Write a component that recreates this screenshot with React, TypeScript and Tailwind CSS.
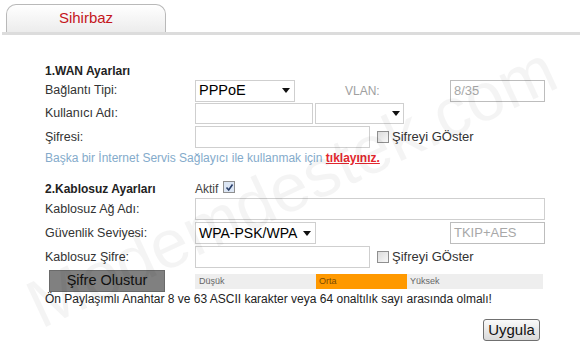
import React from "react";

const Arrow = () => (
  <svg width="8" height="5" viewBox="0 0 8 5" className="shrink-0">
    <path d="M0 0 H8 L4 5 Z" fill="#111" />
  </svg>
);

const Check = ({ checked }: { checked?: boolean }) => (
  <div
    className={
      "w-[12px] h-[12px] border border-[#8f8f8f] flex items-center justify-center " +
      (checked ? "bg-[#dce6f4]" : "bg-gradient-to-br from-[#dcdcdc] to-[#f8f8f8]")
    }
  >
    {checked && (
      <svg width="9" height="9" viewBox="0 0 9 9">
        <path d="M1.5 4.5 L3.7 7 L7.5 1.5" stroke="#2a3f6a" strokeWidth="1.6" fill="none" />
      </svg>
    )}
  </div>
);

const Label = ({ children }: { children: React.ReactNode }) => (
  <div className="w-[150px] shrink-0 text-[12.5px] text-[#333] whitespace-nowrap">{children}</div>
);

export default function App() {
  return (
    <div
      className="relative w-[582px] h-[351px] bg-white overflow-hidden"
      style={{ fontFamily: '"Liberation Sans", Arial, sans-serif' }}
    >
      {/* tab header */}
      <div className="pt-[4px] px-[4px] flex items-end border-b-[3px] border-[#dcdcdc] mx-[2px]">
        <div className="w-[160px] h-[28px] rounded-t-[10px] border border-b-0 border-[#b9b9b9] bg-gradient-to-b from-white to-[#ececec] flex items-center justify-center text-[15px] text-[#c4161c]">
          Sihirbaz
        </div>
      </div>

      <div className="flex flex-col pl-[45px] pt-[28px]">
        {/* WAN */}
        <div className="h-[16px] flex items-center text-[12px] font-bold text-[#222]">1.WAN Ayarları</div>
        <div className="h-[23px] flex items-center">
          <Label>Bağlantı Tipi:</Label>
          <div className="w-[100px] h-[22px] border border-[#cfcfcf] flex items-center justify-between pl-[3px] pr-[4px] text-[14.5px] text-black whitespace-nowrap">
            PPPoE <Arrow />
          </div>
          <div className="w-[155px] pl-[50px] text-[12px] text-[#a0a0a0]">VLAN:</div>
          <div className="w-[95px] h-[22px] border border-[#bdbdbd] flex items-center pl-[3px] text-[13px] text-[#a8a8a8]">
            8/35
          </div>
        </div>
        <div className="h-[23px] flex items-center">
          <Label>Kullanıcı Adı:</Label>
          <div className="w-[118px] h-[21px] border border-[#cfcfcf]" />
          <div className="ml-[2px] w-[89px] h-[21px] border border-[#cfcfcf] flex items-center justify-end pr-[3px]">
            <Arrow />
          </div>
        </div>
        <div className="h-[24px] flex items-center">
          <Label>Şifresi:</Label>
          <div className="w-[175px] h-[22px] border border-[#cfcfcf]" />
          <div className="ml-[7px]">
            <Check />
          </div>
          <div className="ml-[3px] text-[13px] text-[#333]">Şifreyi GÖster</div>
        </div>
        <div className="h-[18px] flex items-center text-[12px] text-[#84abcb] whitespace-nowrap">
          Başka bir İnternet Servis Sağlayıcı ile kullanmak için&nbsp;
          <span className="text-[#e3262d] font-bold underline">tıklayınız.</span>
        </div>

        {/* Wireless */}
        <div className="mt-[14px] h-[16px] flex items-center">
          <div className="w-[150px] text-[12px] font-bold text-[#222]">2.Kablosuz Ayarları</div>
          <div className="text-[12px] text-[#444]">Aktif</div>
          <div className="ml-[5px] -mt-[4px]">
            <Check checked />
          </div>
        </div>
        <div className="h-[24px] flex items-center">
          <Label>Kablosuz Ağ Adı:</Label>
          <div className="w-[350px] h-[22px] border border-[#cfcfcf]" />
        </div>
        <div className="h-[24px] flex items-center">
          <Label>Güvenlik Seviyesi:</Label>
          <div className="w-[121px] h-[22px] border border-[#cfcfcf] flex items-center justify-between pl-[3px] pr-[4px] text-[14px] text-black whitespace-nowrap">
            WPA-PSK/WPA <Arrow />
          </div>
          <div className="ml-[134px] w-[95px] h-[22px] border border-[#bdbdbd] flex items-center pl-[3px] text-[13px] text-[#a8a8a8]">
            TKIP+AES
          </div>
        </div>
        <div className="h-[24px] flex items-center">
          <Label>Kablosuz Şifre:</Label>
          <div className="w-[175px] h-[22px] border border-[#cfcfcf]" />
          <div className="ml-[7px]">
            <Check />
          </div>
          <div className="ml-[3px] text-[13px] text-[#333]">Şifreyi GÖster</div>
        </div>
        <div className="h-[24px] flex items-center">
          <div className="w-[150px] shrink-0 pl-[4px]">
            <div className="w-[116px] h-[22px] bg-[#808080] border border-[#6a6a6a] flex items-center justify-center text-[14.5px] text-[#111] whitespace-nowrap">
              Şifre Olustur
            </div>
          </div>
          <div className="w-[348px] h-[15px] flex text-[9px] leading-[15px]">
            <div className="w-[121px] bg-[#eeeeee] text-[#666] pl-[4px]">Düşük</div>
            <div className="w-[91px] bg-[#ff9900] text-[#7a4a00] pl-[3px]">Orta</div>
            <div className="flex-1 bg-[#eeeeee] text-[#666] pl-[3px]">Yüksek</div>
          </div>
        </div>
        <div className="h-[12px] flex items-center text-[12px] text-[#222] whitespace-nowrap">
          Ön Paylaşımlı Anahtar 8 ve 63 ASCII karakter veya 64 onaltılık sayı arasında olmalı!
        </div>
        <div className="mt-[14px] flex justify-end pr-[42px]">
          <div className="w-[57px] h-[22px] rounded-[3px] border border-[#707070] bg-gradient-to-b from-[#fafafa] to-[#d9d9d9] flex items-center justify-center text-[15px] text-[#111]">
            Uygula
          </div>
        </div>
      </div>

      {/* watermark */}
      <div className="absolute inset-0 pointer-events-none flex items-center justify-center">
        <div className="text-[68px] text-black/[0.045] whitespace-nowrap -rotate-[25deg] translate-y-[10px]">
          Modemdestek.com
        </div>
      </div>
    </div>
  );
}
